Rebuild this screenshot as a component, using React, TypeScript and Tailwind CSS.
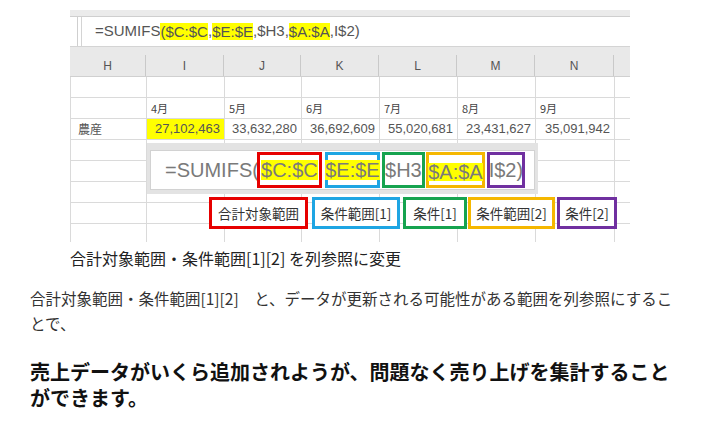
const colW = ['w-[76px]', 'w-[78px]', 'w-[77px]', 'w-[78px]', 'w-[78px]', 'w-[78px]', 'w-[79px]'];
const letters = ['H', 'I', 'J', 'K', 'L', 'M', 'N'];
const months = ['4月', '5月', '6月', '7月', '8月', '9月'];
const values = ['27,102,463', '33,632,280', '36,692,609', '55,020,681', '23,431,627', '35,091,942'];

const sans = "font-['Liberation_Sans',Arial,sans-serif]";
const jp = "font-['Noto_Sans_CJK_JP',sans-serif]";

function GridRow({ cells }: { cells?: (React.ReactNode | null)[] }) {
  return (
    <div className="flex h-[21px] border-b border-[#dadada]">
      {colW.map((w, i) => (
        <div key={i} className={`${w} shrink-0 h-full border-r border-[#dadada]`}>
          {cells ? cells[i] : null}
        </div>
      ))}
      <div className="flex-1" />
    </div>
  );
}

function Sheet() {
  const monthCells = [null, ...months.map((m) => (
    <div className={`h-full flex items-center pl-[4px] text-[11px] text-[#444] ${jp}`}>{m}</div>
  ))];
  const valueCells = [
    <div className={`h-full flex items-center pl-[7px] text-[12px] text-[#555] ${jp}`}>農産</div>,
    ...values.map((v, i) => (
      <div
        className={`h-full flex items-center justify-end pr-[4px] text-[13px] text-[#555] ${sans} ${
          i === 0 ? 'bg-[#ffff00]' : ''
        }`}
      >
        {v}
      </div>
    )),
  ];

  return (
    <div className="relative ml-[70px] w-[560px] h-[232px] overflow-hidden bg-white">
      {/* 数式バー */}
      <div className="h-[7px] bg-[#ebebeb] border-b border-[#cfcfcf]" />
      <div className="flex h-[30px] bg-white border-b border-[#d4d4d4]">
        <div className="w-[8px] border-r border-[#cfcfcf]" />
        <div className="w-[3px]" />
        <div className={`flex-1 flex items-center pl-[13px] border-l border-[#d4d4d4] text-[15px] text-[#555] ${sans}`}>
          =SUMIFS<span className="bg-[#ffff00] leading-[17px]">($C:$C</span>,
          <span className="bg-[#ffff00] leading-[17px]">$E:$E</span>,$H3,
          <span className="bg-[#ffff00] leading-[17px]">$A:$A</span>,I$2)
        </div>
      </div>

      {/* 列見出し */}
      <div className="flex items-end h-[30px] bg-[#e9e9e9] border-b border-[#d0d0d0]">
        {colW.map((w, i) => (
          <div
            key={i}
            className={`${w} shrink-0 h-[21px] flex items-center justify-center border-r border-[#c9c9c9] text-[12px] text-[#555] ${sans}`}
          >
            {letters[i]}
          </div>
        ))}
        <div className="flex-1" />
      </div>

      <div className="border-l border-[#dadada]">
        <GridRow />
        <GridRow cells={monthCells} />
        <GridRow cells={valueCells} />
        <GridRow />
        <GridRow />
        <GridRow />
        <GridRow />
        <GridRow />
      </div>

      {/* 拡大した数式 */}
      <div className="absolute left-[77px] top-[133px] w-[391px] h-[51px] bg-[#e3e3e3] pt-[7px] px-[3px]">
        <div className={`h-[40px] bg-white border border-[#d2d2d2] flex items-center pl-[14px] text-[20px] text-[#7a7a7a] ${sans}`}>
          <span>=SUMIFS(</span>
          <div className="w-[65px] h-[36px] shrink-0 -ml-[2px] border-[3px] border-[#e60000] bg-white flex items-center justify-center whitespace-nowrap">
            <span className="bg-[#ffff00] leading-[20px]">$C:$C</span>
          </div>
          <div className="w-[55px] h-[36px] shrink-0 ml-[3px] border-[3px] border-[#1ea5e3] flex items-center justify-center whitespace-nowrap">
            <span className="bg-[#ffff00] leading-[20px]">$E:$E</span>
          </div>
          <div className="w-[43px] h-[36px] shrink-0 ml-[2px] border-[3px] border-[#16a34f] flex items-center justify-center whitespace-nowrap">
            $H3
          </div>
          <div className="w-[59px] h-[36px] shrink-0 ml-[1px] border-[3px] border-[#f5b700] flex items-center justify-center whitespace-nowrap">
            <span className="bg-[#ffff00] leading-[18px] mt-[4px]">$A:$A</span>
          </div>
          <div className="w-[38px] h-[36px] shrink-0 ml-[2px] border-[3px] border-[#7030a0] flex items-center justify-center whitespace-nowrap">
            I$2)
          </div>
        </div>
      </div>

      {/* 引数ラベル */}
      <div className={`absolute left-[139px] top-[187px] flex text-[13.5px] text-[#333] ${jp}`}>
        <div className="w-[99px] h-[32px] border-[3px] border-[#e60000] bg-white flex items-center justify-center">
          合計対象範囲
        </div>
        <div className="w-[88px] h-[32px] ml-[4px] border-[3px] border-[#1ea5e3] bg-white flex items-center justify-center">
          条件範囲[1]
        </div>
        <div className="w-[64px] h-[32px] ml-[3px] border-[3px] border-[#16a34f] bg-white flex items-center justify-center">
          条件[1]
        </div>
        <div className="w-[87px] h-[32px] ml-[1px] border-[3px] border-[#f5b700] bg-white flex items-center justify-center">
          条件範囲[2]
        </div>
        <div className="w-[60px] h-[32px] ml-[2px] border-[3px] border-[#7030a0] bg-white flex items-center justify-center">
          条件[2]
        </div>
      </div>
    </div>
  );
}

export default function App() {
  return (
    <div className={`w-[701px] h-[429px] overflow-hidden bg-white pt-[10px] ${jp}`}>
      <Sheet />
      <p className="ml-[70px] mt-[4px] text-[16px] leading-[24px] text-[#222]">
        合計対象範囲・条件範囲[1][2] を列参照に変更
      </p>
      <p className="ml-[30px] w-[665px] mt-[16px] text-[15.5px] leading-[25px] text-[#333]">
        合計対象範囲・条件範囲[1][2]　と、データが更新される可能性がある範囲を列参照にするこ
        <br />
        とで、
      </p>
      <h2 className="ml-[30px] w-[645px] mt-[23px] text-[20px] leading-[26px] font-bold text-[#111]">
        売上データがいくら追加されようが、問題なく売り上げを集計することができます。
      </h2>
    </div>
  );
}
